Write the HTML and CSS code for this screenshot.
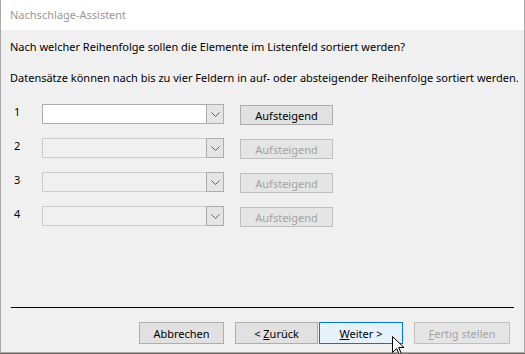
FILE: index.html
```html
<!DOCTYPE html>
<html>
<head>
    <title>Nachschlage-Assistent</title>
    <meta charset="UTF-8">
    <link rel="stylesheet" href="styles.css">
</head>
<body>
    <div class="window">
        <div class="titlebar">Nachschlage-Assistent</div>

        <div class="content">
            <p class="question">Nach welcher Reihenfolge sollen die Elemente im Listenfeld sortiert werden?</p>
            <p class="hint">Datensätze können nach bis zu vier Feldern in auf- oder absteigender Reihenfolge sortiert werden.</p>

            <div class="sort-rows">
                <div class="sort-row">
                    <span class="num">1</span>
                    <div class="combo">
                        <span class="combo-field"></span>
                        <span class="combo-arrow">
                            <svg width="9" height="5" viewBox="0 0 9 5"><path d="M0.5 0.5 L4.5 4.5 L8.5 0.5" fill="none" stroke="#606060" stroke-width="1"/></svg>
                        </span>
                    </div>
                    <button class="btn">Aufsteigend</button>
                </div>
                <div class="sort-row disabled">
                    <span class="num">2</span>
                    <div class="combo">
                        <span class="combo-field"></span>
                        <span class="combo-arrow">
                            <svg width="9" height="5" viewBox="0 0 9 5"><path d="M0.5 0.5 L4.5 4.5 L8.5 0.5" fill="none" stroke="#606060" stroke-width="1"/></svg>
                        </span>
                    </div>
                    <button class="btn" disabled>Aufsteigend</button>
                </div>
                <div class="sort-row disabled">
                    <span class="num">3</span>
                    <div class="combo">
                        <span class="combo-field"></span>
                        <span class="combo-arrow">
                            <svg width="9" height="5" viewBox="0 0 9 5"><path d="M0.5 0.5 L4.5 4.5 L8.5 0.5" fill="none" stroke="#606060" stroke-width="1"/></svg>
                        </span>
                    </div>
                    <button class="btn" disabled>Aufsteigend</button>
                </div>
                <div class="sort-row disabled">
                    <span class="num">4</span>
                    <div class="combo">
                        <span class="combo-field"></span>
                        <span class="combo-arrow">
                            <svg width="9" height="5" viewBox="0 0 9 5"><path d="M0.5 0.5 L4.5 4.5 L8.5 0.5" fill="none" stroke="#606060" stroke-width="1"/></svg>
                        </span>
                    </div>
                    <button class="btn" disabled>Aufsteigend</button>
                </div>
            </div>
        </div>

        <div class="footer">
            <div class="separator"></div>
            <div class="buttons">
                <button class="btn btn-wide">Abbrechen</button>
                <button class="btn btn-back">&lt; <u>Z</u>urück</button>
                <button class="btn btn-next default">
                    <u>W</u>eiter &gt;
                    <svg class="cursor" width="13" height="20" viewBox="0 0 13 20">
                        <path d="M0.5 0.5 L0.5 16.5 L4.5 12.5 L7.5 19 L9.5 18 L6.7 11.5 L12 11.5 Z" fill="#fff" stroke="#000" stroke-width="1" stroke-linejoin="miter"/>
                    </svg>
                </button>
                <button class="btn btn-finish" disabled><u>F</u>ertig stellen</button>
            </div>
        </div>
    </div>
</body>
</html>
```

FILE: styles.css
```css
/* Dialog im Stil von Windows 10 */
body {
    margin: 0;
    background-color: #6e6a68;
    font-family: "Noto Sans", "Open Sans", sans-serif;
    font-size: 11px;
    color: #000;
}

.window {
    width: 523px;
    height: 352px;
    border-left: 1px solid #aaaaaa;
    border-right: 1px solid #aaaaaa;
    border-bottom: 1px solid #aaaaaa;
    background-color: #f0f0f0;
    display: flex;
    flex-direction: column;
}

.titlebar {
    height: 30px;
    line-height: 30px;
    padding-left: 9px;
    background-color: #fff;
    color: #999;
}

.content {
    flex: 1;
    padding: 0 9px;
}

.question,
.hint {
    margin: 0;
    line-height: 16px;
    white-space: nowrap;
}

.question {
    margin-top: 9px;
}

.hint {
    margin-top: 15px;
}

.sort-rows {
    margin-top: 18px;
    display: flex;
    flex-direction: column;
    gap: 14px;
}

.sort-row {
    display: flex;
    align-items: flex-start;
    height: 20px;
}

.num {
    width: 28px;
    padding-left: 4px;
    line-height: 16px;
}

.combo {
    display: flex;
    width: 182px;
    height: 20px;
    box-sizing: border-box;
    border: 1px solid #adadad;
    background-color: #fff;
}

.combo-field {
    flex: 1;
}

.combo-arrow {
    width: 16px;
    display: flex;
    align-items: center;
    justify-content: center;
    background-color: #e5e5e5;
    border-left: 1px solid #adadad;
}

.btn {
    font-family: inherit;
    font-size: 11px;
    height: 20px;
    width: 93px;
    padding: 0;
    margin-top: 1px;
    margin-left: 16px;
    border: 1px solid #adadad;
    background-color: #e1e1e1;
    color: #000;
}

.btn:disabled {
    border-color: #bfbfbf;
    background-color: #e5e5e5;
    color: #a3a3a3;
}

.sort-row.disabled .combo {
    background-color: #f0f0f0;
    border-color: #cccccc;
}

.sort-row.disabled .combo-arrow {
    border: 1px solid #adadad;
    margin: -1px -1px -1px 0;
}

/* Unterer Bereich mit Trennlinie */
.footer {
    padding: 0 10px 8px 10px;
}

.separator {
    height: 1px;
    background-color: #000;
    margin-bottom: 14px;
}

.buttons {
    display: flex;
    justify-content: flex-end;
    padding-right: 4px;
}

.buttons .btn {
    height: 22px;
    margin: 0;
}

.btn-wide {
    width: 85px;
}

.btn-back {
    width: 83px;
    margin-left: 11px !important;
}

.btn-next {
    width: 84px;
    margin-left: 1px !important;
    position: relative;
}

.btn-finish {
    width: 96px;
    margin-left: 11px !important;
}

.btn.default {
    border-color: #0078d7;
    background-color: #e5f1fb;
}

.cursor {
    position: absolute;
    left: 72px;
    top: 13px;
}
```
